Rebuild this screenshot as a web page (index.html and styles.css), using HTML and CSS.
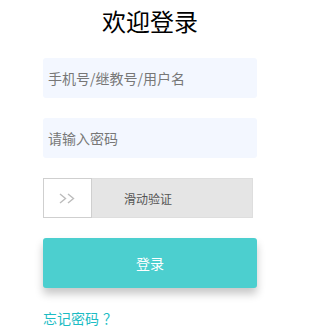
FILE: index.html
```html
<!DOCTYPE html>
<html lang="zh-CN">
<head>
<meta charset="utf-8">
<title>欢迎登录</title>
<link rel="stylesheet" href="styles.css">
</head>
<body>
<div class="login">
  <h1 class="title">欢迎登录</h1>
  <div class="field"><span class="placeholder">手机号/继教号/用户名</span></div>
  <div class="field"><span class="placeholder">请输入密码</span></div>
  <div class="slider">
    <div class="handle">
      <svg width="17" height="11" viewBox="0 0 17 11"><path d="M1 1 L6.5 5.5 L1 10 M9 1 L14.5 5.5 L9 10" fill="none" stroke="#bcbcbc" stroke-width="1.4"/></svg>
    </div>
    <span class="slider-text">滑动验证</span>
  </div>
  <button class="submit">登录</button>
  <a class="forgot">忘记密码<span class="qmark">？</span></a>
</div>
</body>
</html>
```
FILE: styles.css
```css
* { box-sizing: border-box; }
body {
  margin: 0;
  background: #fff;
  font-family: "Noto Sans CJK SC", "Noto Sans", sans-serif;
}
.login {
  width: 214px;
  margin-left: 43px;
  display: flex;
  flex-direction: column;
}
.title {
  margin: 0;
  height: 58px;
  padding-top: 6px;
  font-size: 24px;
  font-weight: 400;
  line-height: 30px;
  text-align: center;
  color: #000;
}
.field {
  height: 40px;
  margin-bottom: 20px;
  background: #f3f7ff;
  border-radius: 3px;
  display: flex;
  align-items: center;
  padding-left: 5px;
}
.placeholder {
  font-size: 14px;
  color: #777;
}
.slider {
  position: relative;
  width: 210px;
  height: 40px;
  background: #e5e5e5;
  border: 1px solid #dedede;
  display: flex;
  align-items: stretch;
  margin-bottom: 20px;
}
.handle {
  width: 49px;
  margin: -1px 0 -1px -1px;
  background: #fff;
  border: 1px solid #cfcfcf;
  display: flex;
  align-items: center;
  justify-content: center;
  position: relative;
  z-index: 1;
}
.slider-text {
  position: absolute;
  left: 0;
  right: 0;
  top: 0;
  bottom: 0;
  display: flex;
  align-items: center;
  justify-content: center;
  font-size: 12px;
  color: #555;
}
.submit {
  height: 50px;
  border: 0;
  border-radius: 3px;
  background: #4ccfcf;
  color: #fff;
  font-family: inherit;
  font-size: 14px;
  box-shadow: 0 6px 8px rgba(0,0,0,0.22);
  margin-bottom: 20px;
  padding: 0;
}
.forgot {
  font-size: 14px;
  color: #1cbcc4;
  line-height: 20px;
}
.qmark {
  display: inline-block;
  margin-left: 4px;
}
```
